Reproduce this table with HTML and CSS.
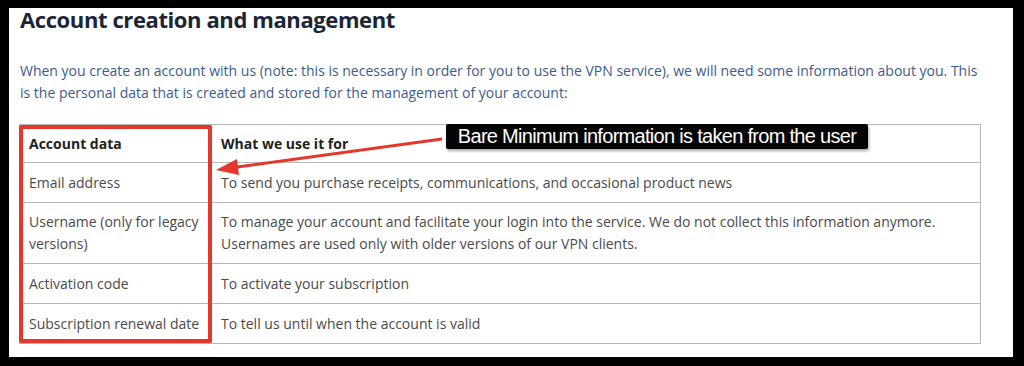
FILE: index.html
```html
<!doctype html>
<html lang="en">
  <head>
    <meta charset="UTF-8" />
    <meta name="viewport" content="width=device-width, initial-scale=1.0" />
    <title>Account creation and management</title>
    <link rel="stylesheet" href="styles.css">
  </head>
  <body>
    <div class="panel">
      <h2>Account creation and management</h2>
      <p class="intro">
        When you create an account with us (note: this is necessary in order for you to use the VPN service), we will need some information about you. This is the personal data that is created and stored for the management of your account:
      </p>

      <div class="table-wrap">
        <table class="data-table">
          <thead>
            <tr>
              <th class="col-data">Account data</th>
              <th>What we use it for</th>
            </tr>
          </thead>
          <tbody>
            <tr>
              <td>Email address</td>
              <td>To send you purchase receipts, communications, and occasional product news</td>
            </tr>
            <tr class="tall">
              <td>Username (only for legacy versions)</td>
              <td>To manage your account and facilitate your login into the service. We do not collect this information anymore. Usernames are used only with older versions of our VPN clients.</td>
            </tr>
            <tr>
              <td>Activation code</td>
              <td>To activate your subscription</td>
            </tr>
            <tr>
              <td>Subscription renewal date</td>
              <td>To tell us until when the account is valid</td>
            </tr>
          </tbody>
        </table>

        <!-- annotation layer -->
        <div class="highlight"></div>
        <svg class="arrow" viewBox="0 0 962 220">
          <line x1="218" y1="43" x2="423" y2="15" />
          <polygon points="197,46 220,51 218,35" />
        </svg>
        <div class="callout">Bare Minimum information is taken from the user</div>
      </div>
    </div>
  </body>
</html>
```

FILE: styles.css
```css
:root {
  --heading: #1c2536;
  --intro: #3d5b8c;
  --cell: #4a4a4a;
  --line: #b8b8b8;
  --annot: #e4382c;
}

* {
  margin: 0;
  padding: 0;
  box-sizing: border-box;
}

body {
  background: #000;
  font-family: "Open Sans", "DejaVu Sans", sans-serif;
}

.panel {
  margin: 8px 0 0 9px;
  width: 1004px;
  height: 349px;
  background: #fff;
  padding: 0 32px 0 10px;
}

h2 {
  font-size: 22px;
  font-weight: 700;
  color: var(--heading);
  line-height: 22px;
  padding-left: 1px;
  letter-spacing: -0.4px;
}

.intro {
  margin-top: 30px;
  padding-left: 1px;
  font-size: 14px;
  line-height: 21.5px;
  color: var(--intro);
  max-width: 965px;
}

.table-wrap {
  position: relative;
  margin-top: 21px;
}

.data-table {
  width: 100%;
  border-collapse: collapse;
  font-size: 14px;
  color: var(--cell);
}

.data-table th,
.data-table td {
  text-align: left;
  vertical-align: middle;
  padding: 0 9px;
  border: 1px solid var(--line);
  line-height: 22px;
}

.data-table th {
  height: 38px;
  color: #222;
  font-weight: 700;
}

.data-table td {
  height: 40px;
}

.data-table tr.tall td {
  height: 61px;
}

.col-data {
  width: 192px;
}

.highlight {
  position: absolute;
  left: 0;
  top: 1px;
  width: 193px;
  height: 218px;
  border: 4px solid var(--annot);
  border-radius: 2px;
  pointer-events: none;
}

.arrow {
  position: absolute;
  left: 0;
  top: 0;
  width: 962px;
  height: 220px;
  overflow: visible;
  pointer-events: none;
}

.arrow line {
  stroke: var(--annot);
  stroke-width: 3;
}

.arrow polygon {
  fill: var(--annot);
}

.callout {
  position: absolute;
  left: 427px;
  top: 0;
  width: 422px;
  height: 25px;
  background: #050505;
  color: #fff;
  border-radius: 2px;
  box-shadow: 1px 2px 3px rgba(0, 0, 0, 0.35);
  font-family: "Liberation Sans", Arial, sans-serif;
  font-size: 20px;
  line-height: 25px;
  text-align: center;
  letter-spacing: -0.7px;
}
```
